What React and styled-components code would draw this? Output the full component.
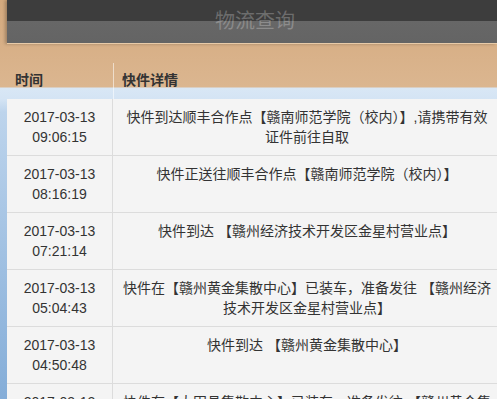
import styled, { createGlobalStyle } from "styled-components";

const records = [
  { date: "2017-03-13", time: "09:06:15", text: "快件到达顺丰合作点【赣南师范学院（校内）】,请携带有效证件前往自取" },
  { date: "2017-03-13", time: "08:16:19", text: "快件正送往顺丰合作点【赣南师范学院（校内）】" },
  { date: "2017-03-13", time: "07:21:14", text: "快件到达 【赣州经济技术开发区金星村营业点】" },
  { date: "2017-03-13", time: "05:04:43", text: "快件在【赣州黄金集散中心】已装车，准备发往 【赣州经济技术开发区金星村营业点】" },
  { date: "2017-03-13", time: "04:50:48", text: "快件到达 【赣州黄金集散中心】" },
  { date: "2017-03-12", time: "22:13:06", text: "快件在【大田县集散中心】已装车，准备发往 【赣州黄金集散中心】" },
];

const GlobalStyle = createGlobalStyle`
  html, body {
    margin: 0;
    height: 100%;
    overflow: hidden;
  }
  body {
    font-family: "Liberation Sans", "Noto Sans CJK SC", sans-serif;
    background: linear-gradient(
      to bottom,
      #d4a97d 0px,
      #dbb690 87px,
      #d9e7f5 88px,
      #d4e4f4 99px,
      #bdd4ec 112px,
      #84add8 399px
    );
  }
`;

const Page = styled.div`
  padding-left: 7px;
`;

const TitleBar = styled.header`
  height: 43px;
  background: linear-gradient(to bottom, #3d3d3d 0, #3d3d3d 21px, #676767 21px, #646464 43px);
  border-bottom: 1px solid #e8cba8;
  box-shadow: -2px 0 3px rgba(0, 0, 0, 0.25);
  display: flex;
  align-items: center;
  justify-content: center;
  padding-left: 6px;
`;

const Title = styled.h1`
  margin: 0;
  font-size: 20px;
  font-weight: normal;
  line-height: 43px;
  color: rgba(255, 255, 255, 0.25);
`;

const HeadRow = styled.div`
  display: grid;
  grid-template-columns: 106px 1fr;
  margin-top: 19px;
  height: 36px;
`;

const HeadCell = styled.div`
  padding: 7px 8px 0;
  font-size: 14px;
  font-weight: bold;
  line-height: 20px;
  color: #333;
  border-left: ${(p) => (p.$divided ? "1px solid rgba(255, 255, 255, 0.55)" : "none")};
`;

const Row = styled.div`
  display: grid;
  grid-template-columns: 106px 1fr;
  background: #f4f4f4;
  border-bottom: 1px solid #dcdcdc;
`;

const TimeCell = styled.div`
  padding: 8px 0;
  border-right: 1px solid #dcdcdc;
  text-align: center;
  font-size: 14px;
  line-height: 20px;
  color: #333;
`;

const DetailCell = styled.div`
  padding: 8px 5px 8px 9px;
  text-align: center;
  font-size: 14px;
  line-height: 20px;
  color: #333;
`;

const App = () => {
  return (
    <Page>
      <GlobalStyle />
      <TitleBar>
        <Title>物流查询</Title>
      </TitleBar>
      <HeadRow>
        <HeadCell>时间</HeadCell>
        <HeadCell $divided>快件详情</HeadCell>
      </HeadRow>
      {records.map((r, i) => (
        <Row key={i}>
          <TimeCell>
            {r.date}
            <br />
            {r.time}
          </TimeCell>
          <DetailCell>{r.text}</DetailCell>
        </Row>
      ))}
    </Page>
  );
};

export default App;
